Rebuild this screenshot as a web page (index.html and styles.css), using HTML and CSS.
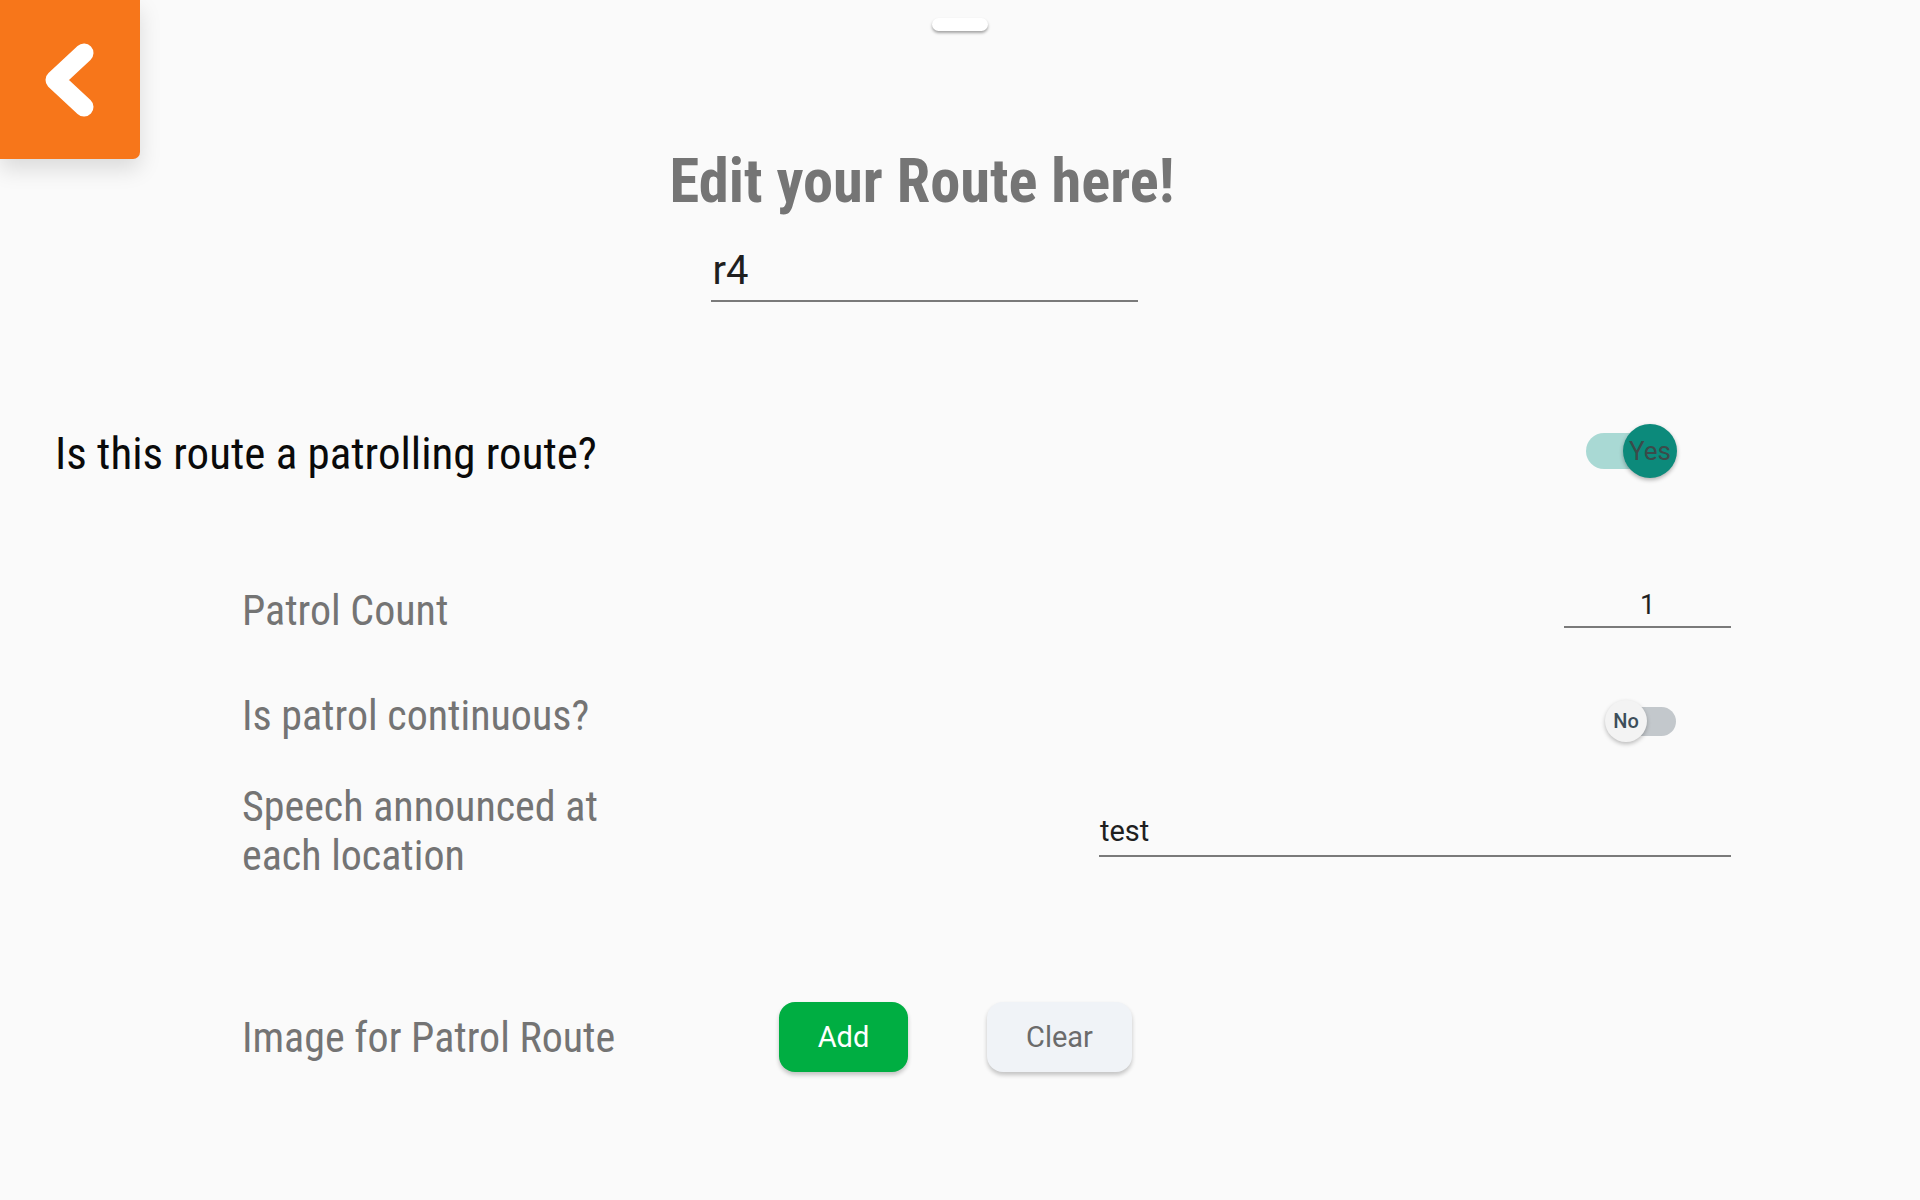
FILE: index.html
```html
<!DOCTYPE html>
<html>
<head>
<meta charset="utf-8">
<link rel="stylesheet" href="styles.css">
</head>
<body>
<a class="back" href="#"><svg width="140" height="159" viewBox="0 0 140 159"><polyline points="84,53 55,80 84,107" fill="none" stroke="#fff" stroke-width="19" stroke-linecap="round" stroke-linejoin="round"/></svg></a>
<div class="handle"></div>
<main class="page">
  <header class="header">
    <h1 class="title">Edit your Route here!</h1>
    <div class="name-input">r4</div>
  </header>
  <section class="main-row">
    <div class="main-label">Is this route a patrolling route?</div>
    <div class="switch switch-on">
      <span class="track"></span>
      <span class="knob">Yes</span>
    </div>
  </section>
  <section class="sub">
    <div class="row row-count">
      <div class="label">Patrol Count</div>
      <div class="count-input">1</div>
    </div>
    <div class="row row-cont">
      <div class="label">Is patrol continuous?</div>
      <div class="switch switch-off">
        <span class="track"></span>
        <span class="knob">No</span>
      </div>
    </div>
    <div class="row row-speech">
      <div class="label label-speech">Speech announced at<br>each location</div>
      <div class="speech-input">test</div>
    </div>
    <div class="row row-image">
      <div class="label label-image">Image for Patrol Route</div>
      <button class="btn btn-add">Add</button>
      <button class="btn btn-clear">Clear</button>
    </div>
  </section>
</main>
</body>
</html>
```
FILE: styles.css
```css
html, body {
  margin: 0;
  padding: 0;
}
body {
  background: #fafafa;
  font-family: Roboto, "Noto Sans", sans-serif;
  width: 1920px;
  height: 1200px;
  overflow: hidden;
}
.back {
  position: absolute;
  left: 0;
  top: 0;
  width: 140px;
  height: 159px;
  background: #f7761a;
  border-radius: 0 0 7px 0;
  box-shadow: 0 10px 22px rgba(0,0,0,0.13);
  display: block;
}
.back svg { display: block; }
.handle {
  position: absolute;
  left: 932px;
  top: 18px;
  width: 56px;
  height: 13px;
  background: #fff;
  border-radius: 7px;
  box-shadow: 0 2px 3px rgba(0,0,0,0.35);
}
.page {
  display: flex;
  flex-direction: column;
}
.header {
  display: flex;
  flex-direction: column;
  align-items: center;
  padding-right: 76px;
  padding-top: 145px;
}
.title {
  margin: 0;
  font-family: "Roboto Condensed", Roboto, sans-serif;
  font-stretch: 75%;
  font-weight: 700;
  font-size: 60.5px;
  line-height: 74px;
  color: #757575;
}
.name-input {
  margin-top: 28px;
  margin-left: 4px;
  width: 425px;
  font-size: 40px;
  line-height: 48px;
  color: #1f1f1f;
  border-bottom: 2px solid #7a7a7a;
  padding-left: 2px;
  padding-bottom: 5px;
}
.main-row {
  margin-top: 111px;
  height: 80px;
  display: flex;
  align-items: center;
  justify-content: space-between;
  padding-left: 55px;
  padding-right: 243px;
}
.main-label {
  font-family: "Roboto Condensed", Roboto, sans-serif;
  font-stretch: 75%;
  font-size: 45px;
  color: #0a0a0a;
}
.switch {
  position: relative;
}
.switch .track {
  position: absolute;
  display: block;
}
.switch .knob {
  position: absolute;
  display: flex;
  align-items: center;
  justify-content: center;
  border-radius: 50%;
}
.switch-on {
  width: 91px;
  height: 54px;
  margin-bottom: 5px;
}
.switch-on .track {
  left: 0;
  top: 9px;
  width: 74px;
  height: 36px;
  border-radius: 18px;
  background: #a9d9d4;
}
.switch-on .knob {
  right: 0;
  top: 0;
  width: 54px;
  height: 54px;
  background: #0c8a7b;
  color: #3b4b4a;
  font-size: 26px;
  box-shadow: 0 2px 4px rgba(0,0,0,0.3);
}
.switch-off {
  width: 71px;
  height: 42px;
}
.switch-off .track {
  right: 0;
  top: 7px;
  width: 60px;
  height: 29px;
  border-radius: 15px;
  background: #c3c8cc;
}
.switch-off .knob {
  left: 0;
  top: 0;
  width: 42px;
  height: 42px;
  background: #f3f3f3;
  color: #3d4e5a;
  font-size: 20px;
  font-weight: 500;
  box-shadow: 0 2px 4px rgba(0,0,0,0.25);
}
.sub {
  padding-left: 242px;
  padding-right: 189px;
  display: flex;
  flex-direction: column;
}
.row {
  display: flex;
  align-items: center;
}
.label {
  font-family: "Roboto Condensed", Roboto, sans-serif;
  font-stretch: 75%;
  font-size: 42px;
  line-height: 49px;
  color: #747474;
}
.row-count {
  margin-top: 87px;
  height: 60px;
  justify-content: space-between;
}
.count-input {
  width: 167px;
  text-align: center;
  font-size: 27px;
  line-height: 36px;
  color: #1f1f1f;
  border-bottom: 2px solid #7a7a7a;
  padding-bottom: 3px;
  align-self: flex-end;
  margin-bottom: 12px;
}
.row-cont {
  margin-top: 45px;
  height: 60px;
  justify-content: space-between;
  padding-right: 55px;
}
.row-cont .switch {
  align-self: flex-start;
  margin-top: 15px;
}
.row-speech {
  margin-top: 37px;
  justify-content: space-between;
  align-items: flex-start;
}
.speech-input {
  width: 631px;
  margin-top: 29px;
  font-size: 29px;
  line-height: 40px;
  color: #1f1f1f;
  border-bottom: 2px solid #7a7a7a;
  padding-bottom: 4px;
  padding-left: 1px;
}
.row-image {
  margin-top: 122px;
  height: 70px;
}
.label-image {
  flex: 0 0 537px;
}
.btn {
  border: none;
  height: 70px;
  border-radius: 16px;
  font-family: Roboto, sans-serif;
  font-size: 29px;
  padding: 0;
  box-shadow: 0 3px 4px rgba(0,0,0,0.22);
}
.btn-add {
  width: 129px;
  background: #00ae42;
  color: #fff;
}
.btn-clear {
  margin-left: 79px;
  width: 145px;
  background: #f0f3f7;
  color: #6b6b6b;
}
```
